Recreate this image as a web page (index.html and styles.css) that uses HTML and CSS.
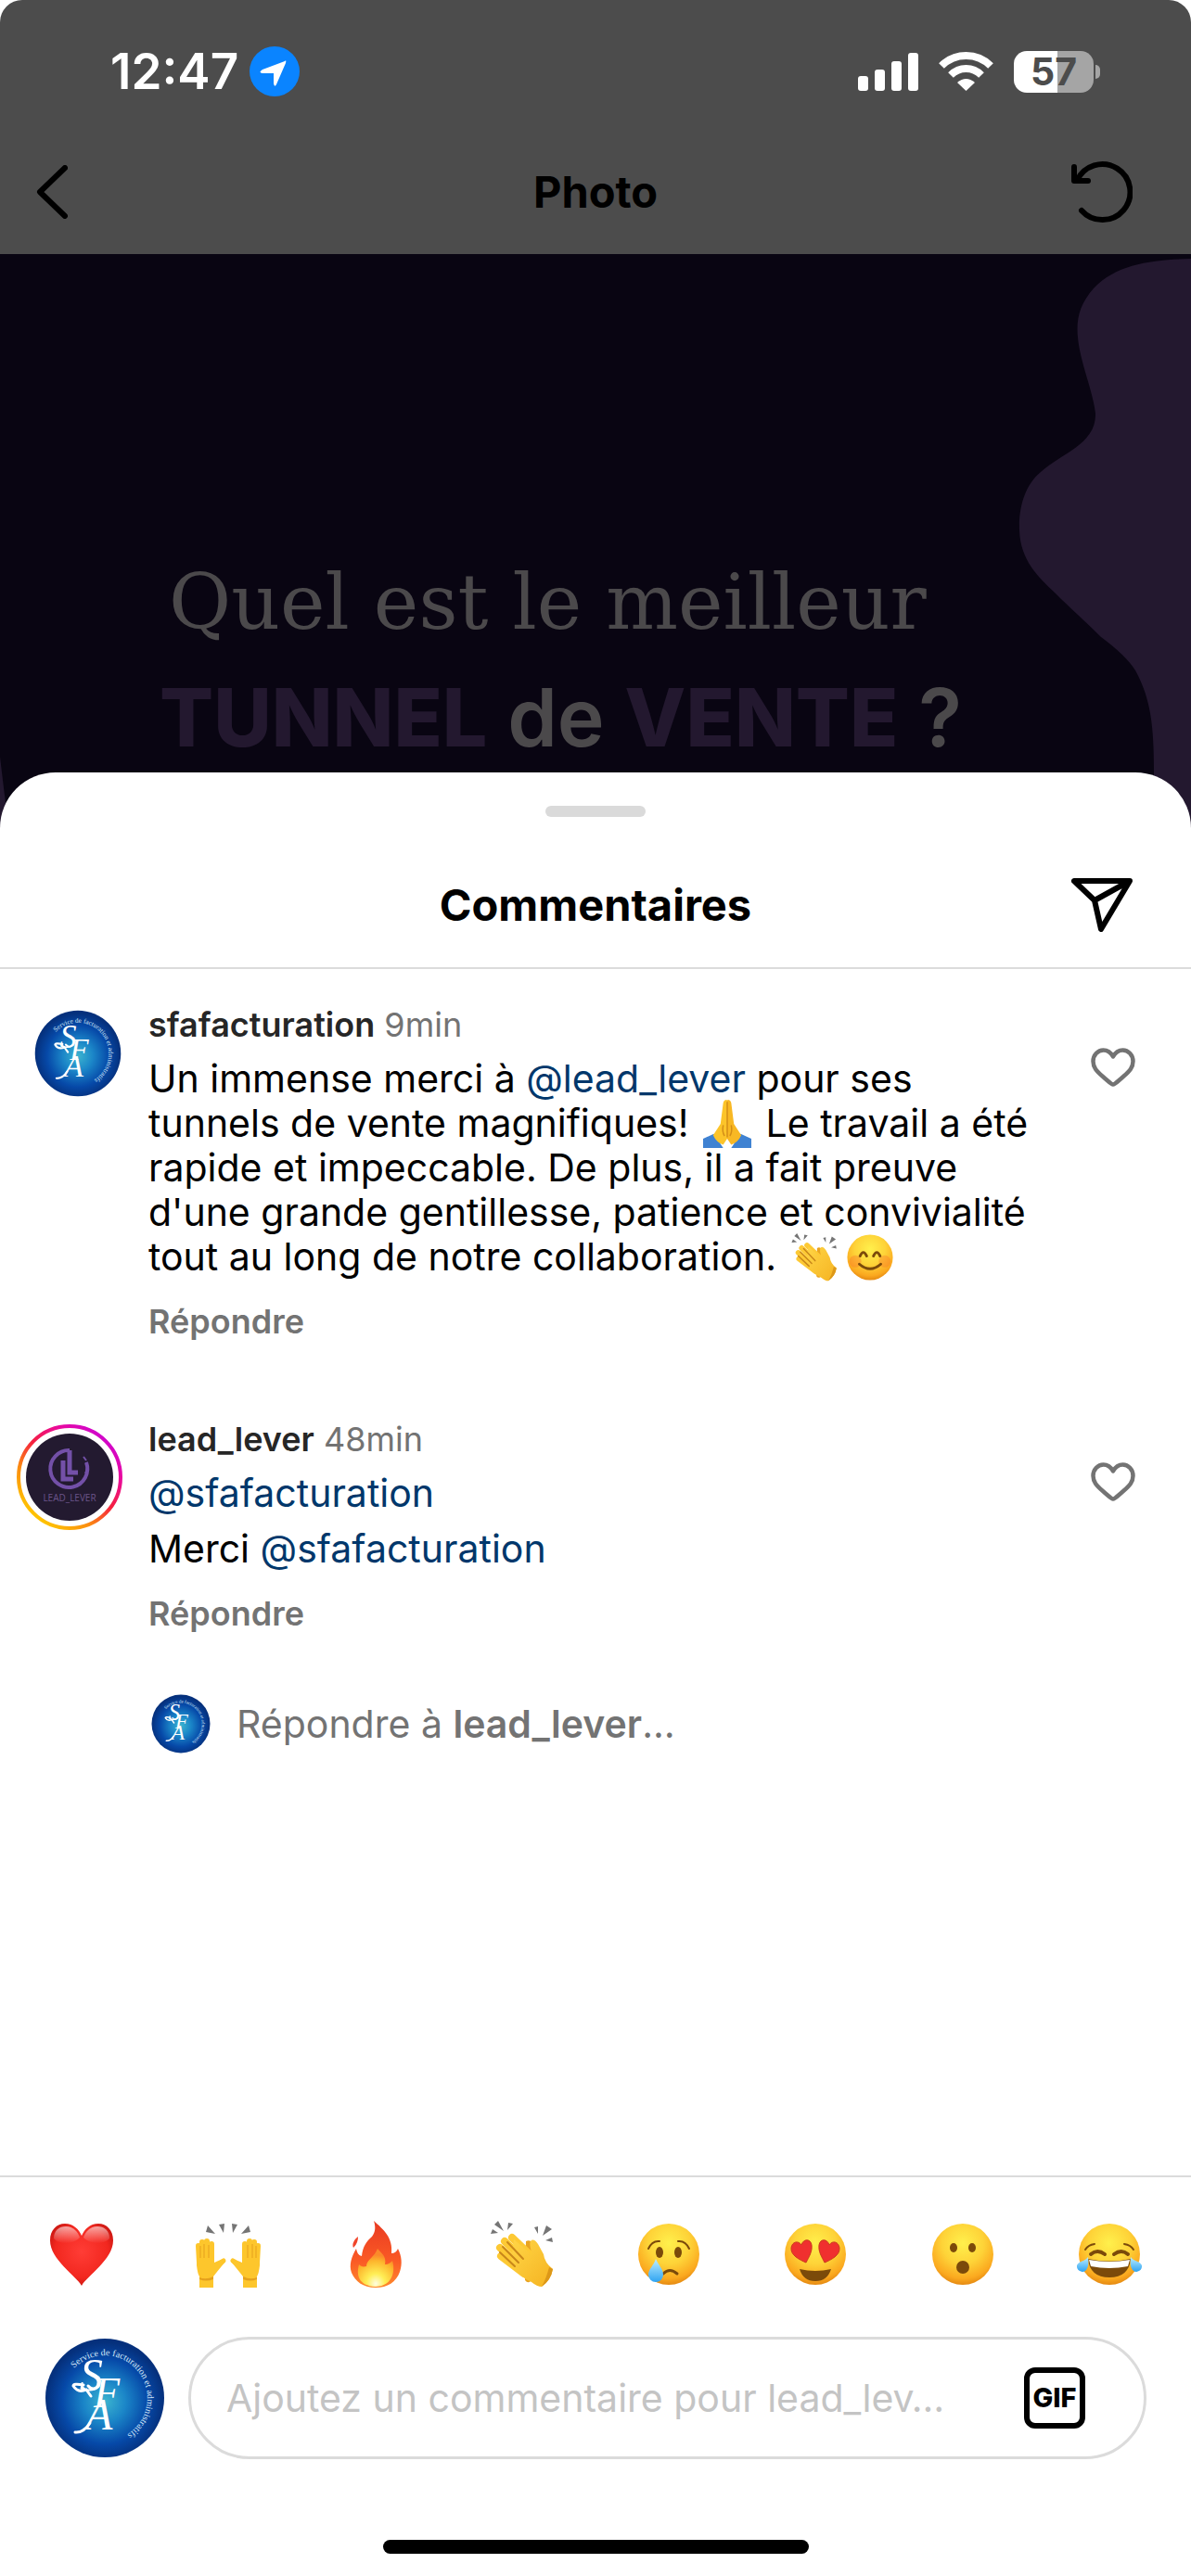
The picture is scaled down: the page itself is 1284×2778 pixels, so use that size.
FILE: index.html
```html
<!DOCTYPE html>
<html lang="fr">
<head>
  <meta charset="UTF-8" />
  <meta name="viewport" content="width=device-width, initial-scale=1.0" />
  <title>Commentaires</title>
  <link rel="stylesheet" href="styles.css">
</head>
<body>

<!-- shared drawings -->
<svg class="sprite" aria-hidden="true">
  <defs>
    <radialGradient id="sfaBlue" cx="50%" cy="53%" r="50%">
      <stop offset="0" stop-color="#3cb4cf" />
      <stop offset="0.35" stop-color="#1b86c8" />
      <stop offset="0.72" stop-color="#0649a8" />
      <stop offset="1" stop-color="#05307c" />
    </radialGradient>
    <linearGradient id="storyRing" x1="15%" y1="95%" x2="85%" y2="10%">
      <stop offset="0" stop-color="#ffcf00" />
      <stop offset="0.3" stop-color="#fb8c10" />
      <stop offset="0.55" stop-color="#f5203f" />
      <stop offset="0.8" stop-color="#ea0a9c" />
      <stop offset="1" stop-color="#cf05cf" />
    </linearGradient>
    <radialGradient id="face" cx="50%" cy="32%" r="68%">
      <stop offset="0" stop-color="#fff04c" />
      <stop offset="0.5" stop-color="#fed338" />
      <stop offset="0.85" stop-color="#fba91f" />
      <stop offset="1" stop-color="#e58a12" />
    </radialGradient>
    <radialGradient id="redHeart" cx="50%" cy="45%" r="60%">
      <stop offset="0" stop-color="#ff3d36" />
      <stop offset="0.7" stop-color="#f2271f" />
      <stop offset="1" stop-color="#c4140f" />
    </radialGradient>
    <linearGradient id="shine" x1="0" y1="0" x2="0" y2="1">
      <stop offset="0" stop-color="#fff" stop-opacity="0.6" />
      <stop offset="1" stop-color="#fff" stop-opacity="0" />
    </linearGradient>
    <linearGradient id="flame" x1="0" y1="0" x2="0" y2="1">
      <stop offset="0" stop-color="#e93a22" />
      <stop offset="0.6" stop-color="#fa5a25" />
      <stop offset="1" stop-color="#ff8a2c" />
    </linearGradient>
    <radialGradient id="flameCore" cx="50%" cy="92%" r="75%">
      <stop offset="0" stop-color="#fffde0" />
      <stop offset="0.35" stop-color="#ffee55" />
      <stop offset="0.8" stop-color="#fdb52c" />
      <stop offset="1" stop-color="#fb8a2a" />
    </radialGradient>
    <linearGradient id="tear" x1="0" y1="0" x2="0" y2="1">
      <stop offset="0" stop-color="#bdeeff" />
      <stop offset="1" stop-color="#2fa4f2" />
    </linearGradient>
    <linearGradient id="skin" x1="0" y1="0" x2="1" y2="1">
      <stop offset="0" stop-color="#ffd546" />
      <stop offset="1" stop-color="#f5b321" />
    </linearGradient>
    <path id="sfaArc" d="M32 33 A46 46 0 1 1 61 111" />
  </defs>

  <symbol id="icon-heart" viewBox="0 0 48 42">
    <path d="M24 39.500 C22 39.500 20.500 37.500 13 31 C6 25 2.500 21 2.500 14.500 C2.500 8 7.500 2.500 13.500 2.500 C18 2.500 21.500 5 24 9.500 C26.500 5 30 2.500 34.500 2.500 C40.500 2.500 45.500 8 45.500 14.500 C45.500 21 42 25 35 31 C27.500 37.500 26 39.500 24 39.500 Z" fill="none" stroke="#737373" stroke-width="4.500" stroke-linejoin="round" />
  </symbol>

  <symbol id="emoji-heart" viewBox="0 0 72 72">
    <path d="M36 70 C30 59 2 42 2 21 C2 10 9 3 18 3 C27 3 33 9 36 16 C39 9 45 3 54 3 C63 3 70 10 70 21 C70 42 42 59 36 70 Z" fill="url(#redHeart)" />
    <path d="M6 19 C6 10 12 6 19 6 C27 6 32 12 34 18 C26 26 12 26 6 19 Z" fill="url(#shine)" />
    <path d="M66 19 C66 10 60 6 53 6 C45 6 40 12 38 18 C46 26 60 26 66 19 Z" fill="url(#shine)" />
  </symbol>

  <symbol id="one-hand" viewBox="0 0 72 72">
    <g stroke="#fdc62c" stroke-width="6" stroke-linecap="round" fill="#fdc62c">
      <path d="M4 27 L5 45 M8 23 L9 45 M13 22 V45 M18 25 V45" />
      <path d="M18 53 L31 43" stroke-width="5" />
      <path d="M2 32 V48 Q3 57 5 60 V72 H20 V60 Q27 51 33 44 L30 41 L21 45 V36 Z" stroke="none" />
    </g>
    <path d="M6 27 V40 M10 25 V40 M15 26 V40" stroke="#e5a01c" stroke-width="1" fill="none" />
    <path d="M5 61 Q12 64 20 60 V63 Q12 66 5 63 Z" fill="#e5a01c" />
    <path d="M14 5 L22 14 L12 12 Z M26 4 L32 3 L31 13 Z" fill="#757575" />
  </symbol>

  <symbol id="emoji-hands" viewBox="0 0 72 72">
    <use href="#one-hand" width="72" height="72" />
    <use href="#one-hand" width="72" height="72" transform="translate(72 0) scale(-1 1)" />
  </symbol>

  <symbol id="emoji-fire" viewBox="0 0 72 72">
    <path d="M34 0 C44 9 55 18 53 35 C56 35 59 33 60 30 C64 38 65 46 62 55 C58 66 49 72 36 72 C22 72 14 65 10 56 C7 47 10 39 15 30 C16 34 17 37 21 38 C22 28 26 22 32 17 C36 12 36 6 34 0 Z" fill="url(#flame)" />
    <path d="M17 17 C17 21 16 25 12 29 C10 25 13 20 17 17 Z" fill="#f0452a" />
    <path d="M38 30 C42 35 48 38 46 47 C50 47 52 45 54 43 C57 52 56 70 36 71 C17 70 15 58 18 47 C20 49 22 50 26 49 C26 42 35 39 38 30 Z" fill="url(#flameCore)" />
  </symbol>

  <symbol id="emoji-clap" viewBox="0 0 72 72">
    <path d="M10 0 L16 11 L6 4 Z M21 2 L26 3 L20 10 Z M4 9 L10 13 L2 14 Z M49 7 L53 6 L53 14 Z M62 5 L68 9 L58 16 Z M68 18 L69 23 L61 21 Z" fill="#757575" />
    <path d="M40 22 Q45 19 49 27 L45 65 Q42 68 39 64 Z" fill="#e9a421" />
    <g stroke="#fdc934" stroke-width="8" stroke-linecap="round">
      <path d="M13 38 L38 57" />
      <path d="M12 29 L40 54" />
      <path d="M17 22 L44 48" />
      <path d="M25 18 L50 42" />
    </g>
    <path d="M27 20 L47 37 Q43 25 45 22 Q48 18 53 25 L59 36 Q60 45 69 52 Q67 64 57 71 Q52 71 46 66 Q32 60 24 46 Z" fill="url(#skin)" />
    <path d="M20 23 L37 41 M15 28 L32 45 M12 34 L28 49" stroke="#c8861a" stroke-width="2" stroke-linecap="round" fill="none" />
    <path d="M69 52 Q67 64 57 71 Q62 62 65 50 Z" fill="#dd9818" />
  </symbol>

  <symbol id="emoji-cry" viewBox="0 0 72 72">
    <circle cx="36" cy="36" r="33" fill="url(#face)" />
    <ellipse cx="26" cy="34" rx="4" ry="6" fill="#7b4a0a" />
    <ellipse cx="46" cy="34" rx="4" ry="6" fill="#7b4a0a" />
    <path d="M14 30 Q18 21 26 22 M58 30 Q54 21 46 22" fill="none" stroke="#7b4a0a" stroke-width="2" stroke-linecap="round" />
    <path d="M30 57 Q37 50 45 57" fill="none" stroke="#7b4a0a" stroke-width="3" stroke-linecap="round" />
    <path d="M22 41 C25 48 30 52 30 58 A8 8 0 0 1 14 58 C14 52 20 48 22 41 Z" fill="url(#tear)" />
  </symbol>

  <symbol id="emoji-love" viewBox="0 0 72 72">
    <circle cx="36" cy="36" r="33" fill="url(#face)" />
    <path id="eyeHeart" d="M26 45 C19 42 9 37 10 29 C11 22 18 21 21 26 C23 19 31 19 32 26 C33 33 29 39 26 45 Z" fill="#f0302f" stroke="#c93a1c" stroke-width="1" />
    <use href="#eyeHeart" transform="translate(72 0) scale(-1 1)" />
    <path d="M19 52 Q36 56 53 52 Q49 65 36 65 Q23 65 19 52 Z" fill="#7b4a0a" />
  </symbol>

  <symbol id="emoji-wow" viewBox="0 0 72 72">
    <circle cx="36" cy="36" r="33" fill="url(#face)" />
    <ellipse cx="26" cy="29" rx="4" ry="5" fill="#7b4a0a" />
    <ellipse cx="46" cy="29" rx="4" ry="5" fill="#7b4a0a" />
    <ellipse cx="36" cy="50" rx="7" ry="7" fill="#7b4a0a" />
  </symbol>

  <symbol id="emoji-joy" viewBox="0 0 72 72">
    <circle cx="36" cy="36" r="33" fill="url(#face)" />
    <path d="M10 31 Q13 26 20 25 M62 31 Q59 26 52 25" fill="none" stroke="#7b4a0a" stroke-width="2" stroke-linecap="round" />
    <path d="M16 36 Q23 30 31 36 M41 36 Q49 30 56 36" fill="none" stroke="#7b4a0a" stroke-width="4" stroke-linecap="round" />
    <path d="M13 41 Q36 46 59 41 Q57 61 36 61 Q15 61 13 41 Z" fill="#7b4a0a" />
    <path d="M14 42 Q36 46 58 42 L56 49 Q36 53 16 49 Z" fill="#fff" />
    <path d="M13 39 C14 47 13 51 10 54 A6 6 0 0 1 1 48 C3 43 10 44 13 39 Z M59 39 C58 47 59 51 62 54 A6 6 0 0 0 71 48 C69 43 62 44 59 39 Z" fill="url(#tear)" />
  </symbol>

  <symbol id="emoji-smile" viewBox="0 0 72 72">
    <circle cx="36" cy="36" r="34" fill="url(#face)" />
    <circle cx="14" cy="42" r="9" fill="#f8702a" opacity="0.350" />
    <circle cx="58" cy="42" r="9" fill="#f8702a" opacity="0.350" />
    <path d="M21 34 Q26 23 31 34 M41 34 Q46 23 51 34" fill="none" stroke="#7b4a0a" stroke-width="4" stroke-linecap="round" />
    <path d="M20 46 Q36 60 52 46" fill="none" stroke="#7b4a0a" stroke-width="4" stroke-linecap="round" />
  </symbol>

  <symbol id="emoji-pray" viewBox="0 0 72 72">
    <path d="M0 58 L16 51 L30 72 H0 Z M72 58 L56 51 L42 72 H72 Z" fill="#3f82d2" />
    <path d="M35 0 Q31 0 30 5 L26 36 L15 53 Q20 64 30 67 L36 58 V1 Z" fill="#fcc42a" />
    <path d="M37 0 Q41 0 42 5 L46 36 L57 53 Q52 64 42 67 L36 58 V1 Z" fill="#f8b824" />
    <path d="M36 3 V56 M30 38 Q28 48 32 54 M42 38 Q44 48 40 54" fill="none" stroke="#d38d18" stroke-width="2" />
  </symbol>
</svg>

<header class="top">
  <div class="status-bar">
    <div class="status-left">
      <span class="time">12:47</span>
      <svg class="location" viewBox="0 0 54 54"><circle cx="27" cy="27" r="27" fill="#0a84ff" /><path d="M38 16 Q40 14 39 18 L29 41 Q27 45 26 40 V29 H14 Q9 28 14 25 Z" fill="#fff" /></svg>
    </div>
    <div class="status-right">
      <svg width="65" height="42" viewBox="0 0 65 42" fill="#fff"><rect x="0" y="26" width="11" height="16" rx="3" /><rect x="18" y="19" width="11" height="23" rx="3" /><rect x="36" y="10" width="11" height="32" rx="3" /><rect x="54" y="1" width="11" height="41" rx="3" /></svg>
      <svg width="59" height="42" viewBox="0 0 59 42"><g fill="none" stroke="#fff" stroke-width="8"><path d="M3 15 Q14 4 29.500 4 Q45 4 56 15" /><path d="M13 25 Q20 18 29.500 18 Q39 18 46 25" /></g><path d="M20 33 Q29.500 25 39 33 L29.500 42 Z" fill="#fff" /></svg>
      <div class="battery"><span>57</span></div>
    </div>
  </div>
  <nav class="bar">
    <button class="icon-btn back" aria-label="Retour"><svg width="34" height="58" viewBox="0 0 34 58"><path d="M31 3 L4 29 L31 55" fill="none" stroke="#000" stroke-width="6" stroke-linecap="round" stroke-linejoin="round" /></svg></button>
    <h1>Photo</h1>
    <button class="icon-btn" aria-label="Actualiser"><svg width="66" height="68" viewBox="0 0 66 68"><g fill="none" stroke="#000" stroke-width="6" stroke-linecap="round" stroke-linejoin="round"><path d="M3 7 V22 H18" /><path d="M6 22 A30 30 0 1 1 11 54" /></g></svg></button>
  </nav>
</header>

<section class="post">
  <svg class="blob-right" width="190" height="622" viewBox="0 0 190 622"><path d="M190 5 C150 6 110 10 85 37 C70 54 66 70 68 90 C70 115 85 150 87 172 C88 205 50 215 28 235 C10 250 4 275 5 298 C6 330 25 348 44 366 C60 382 75 395 93 413 Q120 433 130 449 C147 480 150 510 150 560 V622 H190 Z" fill="#23182f" /></svg>
  <svg class="blob-left" width="10" height="80" viewBox="0 0 10 80"><path d="M0 0 Q4 35 10 80 H0 Z" fill="#23182f" /></svg>
  <p class="post-serif">Quel est le meilleur</p>
  <p class="post-bold"><b>TUNNEL</b> de <b>VENTE</b> ?</p>
</section>

<main class="sheet">
  <div class="grabber"></div>
  <div class="bar sheet-bar">
    <span></span>
    <h2>Commentaires</h2>
    <button class="icon-btn" aria-label="Partager"><svg width="66" height="58" viewBox="0 0 66 58"><path d="M3 3 H63 L32 55 L25 24 Z M25 24 L63 3" fill="none" stroke="#000" stroke-width="6" stroke-linejoin="round" /></svg></button>
  </div>

  <div class="comments">
    <article class="comment">
      <div class="avatar-col">
        <svg class="avatar" viewBox="0 0 130 130" role="img" aria-label="sfafacturation">
          <g id="sfa">
            <circle cx="65" cy="65" r="64" fill="url(#sfaBlue)" />
            <g fill="#fff" font-family="'Liberation Serif', serif" font-style="italic">
              <text x="38" y="57" font-size="50">S</text>
              <text x="53" y="75" font-size="46">F</text>
              <text x="44" y="99" font-size="48">A</text>
            </g>
            <path d="M42 51 Q31 49 31 52 Q36 60 45 56 L50 63 M47 52 Q52 58 58 52 M33 102 Q42 103 49 92" fill="none" stroke="#fff" stroke-width="3" stroke-linecap="round" />
            <text fill="#d5e8f8" font-family="'Liberation Serif', serif" font-size="10"><textPath href="#sfaArc">Service de facturation et administratifs</textPath></text>
          </g>
        </svg>
      </div>
      <div class="comment-body">
        <div class="meta"><strong>sfafacturation</strong> <time>9min</time></div>
        <p>Un immense merci à <a href="#">@lead_lever</a> pour ses tunnels de vente magnifiques! <svg class="inline-emoji"><use href="#emoji-pray" /></svg> Le travail a été rapide et impeccable. De plus, il a fait preuve d'une grande gentillesse, patience et convivialité tout au long de notre collaboration. <svg class="inline-emoji"><use href="#emoji-clap" /></svg><svg class="inline-emoji"><use href="#emoji-smile" /></svg></p>
        <button class="reply">Répondre</button>
      </div>
      <button class="like" aria-label="J'aime"><svg><use href="#icon-heart" /></svg></button>
    </article>

    <article class="comment">
      <div class="avatar-col story">
        <svg class="avatar" viewBox="0 0 114 114" role="img" aria-label="lead_lever">
          <circle cx="57" cy="57" r="55" fill="none" stroke="url(#storyRing)" stroke-width="4" />
          <circle cx="57" cy="57" r="47" fill="#231a30" />
          <path d="M57 28 A20 20 0 1 0 75 41" fill="none" stroke="#7350a8" stroke-width="4" />
          <path d="M72 35 l3 4 M75 41 q2 6 -1 12" fill="none" stroke="#7350a8" stroke-width="2" />
          <path d="M50 39 v20 h11 M57 28 v24 h9" fill="none" stroke="#7350a8" stroke-width="5" />
          <text x="57" y="83" text-anchor="middle" fill="#6b5489" font-family="'Open Sans', sans-serif" font-size="10">LEAD_LEVER</text>
        </svg>
      </div>
      <div class="comment-body">
        <div class="meta"><strong>lead_lever</strong> <time>48min</time></div>
        <p><a href="#">@sfafacturation</a></p>
        <p>Merci <a href="#">@sfafacturation</a></p>
        <button class="reply">Répondre</button>
        <button class="reply-to">
          <svg viewBox="0 0 130 130"><use href="#sfa" /></svg>
          <span>Répondre à <strong>lead_lever</strong>…</span>
        </button>
      </div>
      <button class="like" aria-label="J'aime"><svg><use href="#icon-heart" /></svg></button>
    </article>
  </div>

  <footer class="composer">
    <div class="emoji-row">
      <button aria-label="Coeur"><svg><use href="#emoji-heart" /></svg></button>
      <button aria-label="Mains levées"><svg><use href="#emoji-hands" /></svg></button>
      <button aria-label="Feu"><svg><use href="#emoji-fire" /></svg></button>
      <button aria-label="Applaudissements"><svg><use href="#emoji-clap" /></svg></button>
      <button aria-label="Triste"><svg><use href="#emoji-cry" /></svg></button>
      <button aria-label="Amour"><svg><use href="#emoji-love" /></svg></button>
      <button aria-label="Surpris"><svg><use href="#emoji-wow" /></svg></button>
      <button aria-label="Rire"><svg><use href="#emoji-joy" /></svg></button>
    </div>
    <form class="input-row">
      <svg class="me" viewBox="0 0 130 130"><use href="#sfa" /></svg>
      <div class="field">
        <input type="text" aria-label="Commentaire" placeholder="Ajoutez un commentaire pour lead_lev…">
        <button type="button" class="gif">GIF</button>
      </div>
    </form>
    <div class="home-indicator"></div>
  </footer>
</main>

</body>
</html>
```

FILE: styles.css
```css
* {
  box-sizing: border-box;
}

body {
  margin: 0;
  min-height: 100vh;
  display: flex;
  flex-direction: column;
  background: #fff;
  color: #000;
  font-family: Inter, "Liberation Sans", sans-serif;
  font-size: 41px;
  line-height: 48px;
}

h1, h2, p {
  margin: 0;
}

svg {
  display: block;
  flex-shrink: 0;
}

button {
  padding: 0;
  border: none;
  background: none;
  color: inherit;
  font: inherit;
  cursor: pointer;
}

a {
  color: #00376b;
  text-decoration: none;
}

.sprite {
  position: absolute;
  width: 0;
  height: 0;
}

/* top of the screen */
.top {
  background: #4c4c4c;
  border-radius: 24px 24px 0 0;
}

.status-bar {
  display: flex;
  justify-content: space-between;
  align-items: center;
  padding: 50px 98px 36px 119px;
  color: #fff;
}

.status-left {
  display: flex;
  align-items: center;
  gap: 12px;
}

.time {
  font-size: 53px;
  font-weight: 600;
}

.location {
  width: 54px;
  height: 54px;
}

.status-right {
  display: flex;
  align-items: center;
  gap: 22px;
}

.battery {
  position: relative;
  width: 86px;
  height: 45px;
  margin-right: 7px;
  border-radius: 14px;
  background: linear-gradient(to right, #fff 55%, #a5a5a5 55%);
  color: #4c4c4c;
  font-size: 41px;
  font-weight: 700;
  line-height: 45px;
  text-align: center;
}

.battery::after {
  content: "";
  position: absolute;
  left: 88px;
  top: 15px;
  width: 5px;
  height: 15px;
  border-radius: 0 5px 5px 0;
  background: #a5a5a5;
}

.bar {
  display: grid;
  grid-template-columns: 1fr auto 1fr;
  align-items: center;
  height: 134px;
  padding: 0 63px;
}

.bar h1, .bar h2 {
  grid-column: 2;
  font-size: 47px;
  font-weight: 700;
  line-height: 60px;
}

.icon-btn {
  justify-self: start;
}

.icon-btn:last-child {
  justify-self: end;
}

.back {
  margin-left: -24px;
}

/* dimmed post */
.post {
  position: relative;
  height: 622px;
  padding: 314px 0 0 172px;
  background: #090512;
  color: #4b494b;
}

.blob-right {
  position: absolute;
  top: 0;
  right: 0;
}

.blob-left {
  position: absolute;
  left: 0;
  bottom: 0;
}

.post-serif {
  padding-left: 10px;
  font-family: "DejaVu Serif", serif;
  font-size: 82px;
  line-height: 124px;
}

.post-bold {
  font-size: 86px;
  font-weight: 600;
  line-height: 124px;
}

.post-bold b {
  color: #23182f;
  font-weight: 800;
}

/* comments sheet */
.sheet {
  position: relative;
  flex: 1;
  display: flex;
  flex-direction: column;
  margin-top: -63px;
  padding-top: 36px;
  border-radius: 60px 60px 0 0;
  background: #fff;
}

.grabber {
  width: 108px;
  height: 12px;
  margin: 0 auto 28px;
  border-radius: 6px;
  background: #dadada;
}

.sheet-bar {
  height: 136px;
  border-bottom: 2px solid #dbdbdb;
}

.comments {
  flex: 1;
  display: flex;
  flex-direction: column;
  gap: 83px;
  padding: 38px 60px 0 0;
}

.comment {
  display: flex;
}

.avatar-col {
  flex: 0 0 160px;
  padding: 6px 0 0 37px;
}

.avatar {
  width: 94px;
  height: 94px;
}

.story {
  padding-left: 18px;
}

.story .avatar {
  width: 114px;
  height: 114px;
}

.comment-body {
  flex: 1;
  padding-right: 66px;
}

.meta {
  font-size: 36px;
  line-height: 44px;
  color: #737373;
}

.meta strong {
  color: #262626;
  font-weight: 600;
}

.comment-body p {
  margin-top: 12px;
}

.inline-emoji {
  display: inline-block;
  width: 52px;
  height: 52px;
  margin: -4px 4px;
  vertical-align: -8px;
}

.reply {
  display: block;
  margin-top: 24px;
  color: #737373;
  font-size: 36px;
  font-weight: 600;
  line-height: 44px;
}

.reply-to {
  display: flex;
  align-items: center;
  gap: 28px;
  margin-top: 65px;
  padding-left: 3px;
  color: #737373;
}

.reply-to strong {
  font-weight: 600;
}

.reply-to svg {
  width: 64px;
  height: 64px;
}

.like {
  align-self: flex-start;
  margin-top: 47px;
}

.like svg {
  width: 48px;
  height: 42px;
}

/* bottom composer */
.composer {
  padding-bottom: 24px;
  border-top: 2px solid #dbdbdb;
}

.emoji-row {
  display: flex;
  justify-content: space-between;
  padding: 47px 52px 53px;
}

.emoji-row svg {
  width: 72px;
  height: 72px;
}

.input-row {
  display: flex;
  align-items: center;
  gap: 25px;
  padding: 0 48px;
}

.me {
  width: 130px;
  height: 130px;
}

.field {
  flex: 1;
  display: flex;
  align-items: center;
  height: 132px;
  padding: 0 63px 0 38px;
  border: 3px solid #dbdbdb;
  border-radius: 66px;
}

.field input {
  flex: 1;
  min-width: 0;
  padding: 0;
  border: none;
  outline: none;
  background: none;
  font: inherit;
}

.field input::placeholder {
  color: #c4c4c4;
}

.gif {
  width: 66px;
  height: 66px;
  border: 6px solid #000;
  border-radius: 12px;
  font-size: 29px;
  font-weight: 800;
  line-height: 54px;
}

.home-indicator {
  width: 459px;
  height: 15px;
  margin: 87px auto 0;
  border-radius: 8px;
  background: #000;
}
```
